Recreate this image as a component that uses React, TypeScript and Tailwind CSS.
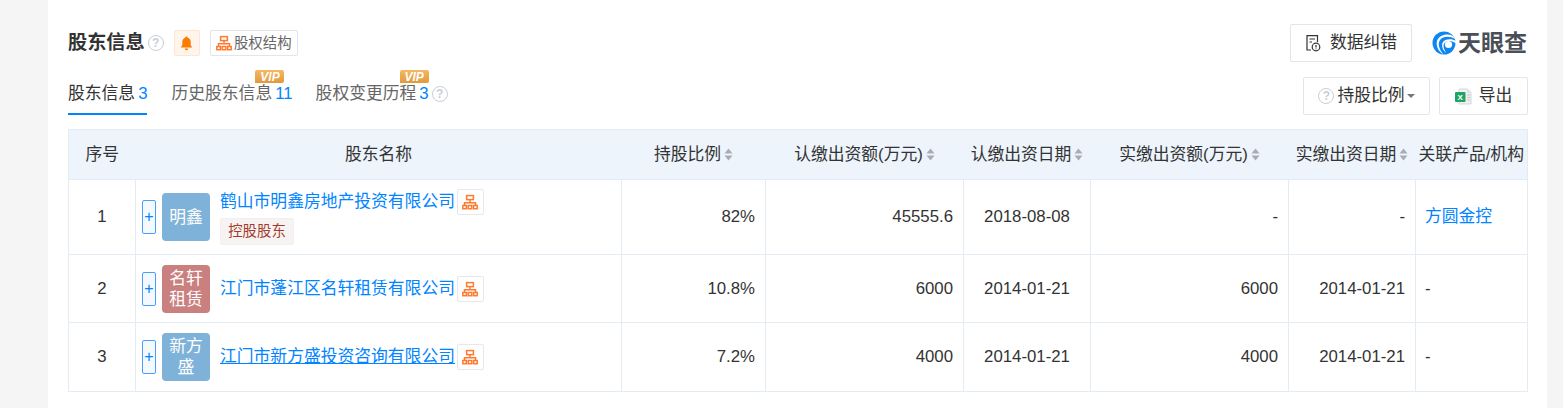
import React from 'react';

const FONT = 'font-["Liberation_Sans","Noto_Sans_CJK_SC",sans-serif]';

const Help = () => (
  <span className="inline-flex h-[16px] w-[16px] items-center justify-center rounded-full border-[1.5px] border-[#c8ced8] text-[12px] font-bold leading-none text-[#c8ced8]">
    ?
  </span>
);

const OrgIcon = ({ size = 16 }: { size?: number }) => (
  <svg width={size} height={size} viewBox="0 0 16 16" fill="none" stroke="#ff7a2e" strokeWidth="1.5">
    <rect x="4.6" y="1.6" width="6.8" height="4" />
    <path d="M8 5.6v4M2.5 11.5V8.8h11v2.7" />
    <rect x="0.8" y="11.5" width="3.6" height="3.2" />
    <rect x="6.2" y="11.5" width="3.6" height="3.2" />
    <rect x="11.6" y="11.5" width="3.6" height="3.2" />
  </svg>
);

const Vip = ({ className }: { className: string }) => (
  <span className={`absolute flex h-[13px] w-[29px] items-center justify-center rounded-[2px] rounded-bl-none bg-gradient-to-b from-[#f5b860] to-[#e09a3e] text-[12px] font-bold italic leading-none text-white ${className}`}>
    VIP
  </span>
);

const Sort = () => (
  <svg width="9" height="13" viewBox="0 0 9 13" className="ml-[3px] inline-block align-[-1px]" fill="#a8adb5">
    <path d="M4.500 0.500 8.500 5.500H0.500z" />
    <path d="M4.500 12.500 8.500 7.500H0.500z" />
  </svg>
);

const Logo = () => (
  <svg width="24" height="24" viewBox="0 0 24 24">
    <circle cx="12" cy="12" r="11.5" fill="#0e86f0" />
    <path d="M23 8C18 5 11 5 8 9 5.500 12.500 7 18 11.500 23.500 7 21 3.500 15 5 10 7 4 15 2 21 5z" fill="#fff" />
    <path d="M24 12.500c-3.500-3-9-3.500-11.500-0.500-1.800 2.200-1 6 2 10 -3.500-2-5.500-7-3.800-10.500C13 7.500 20 7.500 24 10z" fill="#fff" />
    <circle cx="16.500" cy="13.500" r="3.600" fill="#fff" />
  </svg>
);

const ExcelIcon = () => (
  <svg width="17" height="17" viewBox="0 0 17 17">
    <path d="M4 1h8.500L16 4.500V16H4z" fill="#eef0f2" stroke="#d5d8dc" />
    <path d="M12 1v4h4" fill="#dfe2e5" />
    <path d="M12 7h3M12 9.500h3M12 12h3" stroke="#c6cace" />
    <rect x="0" y="4" width="10.500" height="10" rx="1" fill="#1fa463" />
    <text x="5.200" y="12" textAnchor="middle" fontSize="8" fontWeight="700" fill="#fff" fontFamily="Liberation Sans">
      X
    </text>
  </svg>
);

const DocIcon = () => (
  <svg width="17" height="18" viewBox="0 0 17 18" fill="none" stroke="#333" strokeWidth="1.200">
    <path d="M6 16H2V1.600h10.500V8" />
    <path d="M4.500 5h5.500M4.500 8h2.500" />
    <circle cx="11" cy="13" r="3.800" />
    <path d="M11 11v2.500M11 14.500v0.800" />
  </svg>
);

const rows = [
  {
    no: 1,
    avatar: ['明鑫'],
    color: 'bg-[#7fb2d9]',
    name: '鹤山市明鑫房地产投资有限公司',
    tag: '控股股东',
    ratio: '82%',
    sub: '45555.6',
    subDate: '2018-08-08',
    paid: '-',
    paidDate: '-',
    product: '方圆金控',
    height: 'h-[75px]',
  },
  {
    no: 2,
    avatar: ['名轩', '租赁'],
    color: 'bg-[#c9807e]',
    name: '江门市蓬江区名轩租赁有限公司',
    ratio: '10.8%',
    sub: '6000',
    subDate: '2014-01-21',
    paid: '6000',
    paidDate: '2014-01-21',
    product: '-',
    height: 'h-[68px]',
  },
  {
    no: 3,
    avatar: ['新方', '盛'],
    color: 'bg-[#7fb2d9]',
    name: '江门市新方盛投资咨询有限公司',
    underline: true,
    ratio: '7.2%',
    sub: '4000',
    subDate: '2014-01-21',
    paid: '4000',
    paidDate: '2014-01-21',
    product: '-',
    height: 'h-[69px]',
  },
];

export default function App() {
  return (
    <div className={`h-[408px] w-[1563px] overflow-hidden bg-[#f5f5f5] text-[16.8px] text-[#333] ${FONT}`}>
      <div className="ml-[48px] h-full w-[1499px] bg-white pl-[20px] pr-[19px] pt-[24px]">
        {/* title row */}
        <div className="flex h-[38px] items-center justify-between">
          <div className="flex items-center">
            <span className="text-[19.200px] font-bold leading-none">股东信息</span>
            <span className="ml-[3px] flex"><Help /></span>
            <span className="ml-[10px] flex h-[26px] w-[26px] items-center justify-center rounded-[2px] border border-[#fde6d3] bg-[#fff5ec]">
              <svg width="13" height="15" viewBox="0 0 13 15" fill="#ff7a00">
                <path d="M6.500 0.500c-0.700 0-1.100 0.500-1.100 1.100C3.400 2.200 2.300 4 2.300 6v3L0.800 11.500h11.400L10.700 9V6c0-2-1.100-3.800-3.100-4.400 0-0.600-0.400-1.100-1.100-1.100z" />
                <path d="M4.700 12.500a1.800 1.800 0 0 0 3.600 0z" />
              </svg>
            </span>
            <span className="ml-[10px] flex h-[26px] w-[88px] items-center justify-center gap-[2px] rounded-[2px] border border-[#e2e5ec] text-[14.400px] leading-none text-[#666]">
              <OrgIcon />
              股权结构
            </span>
          </div>
          <div className="flex items-center">
            <button className="flex h-[38px] w-[122px] items-center justify-center gap-[8px] rounded-[2px] border border-[#e2e5ec]">
              <DocIcon />
              数据纠错
            </button>
            <span className="ml-[20px] flex w-[96px] items-center gap-[2px]">
              <Logo />
              <span className="text-[23px] font-bold leading-none text-[#4a4f57]">天眼查</span>
            </span>
          </div>
        </div>

        {/* tabs row */}
        <div className="mt-[15px] flex h-[38px] items-start justify-between">
          <div className="flex h-[38px] gap-[24px] text-[#666]">
            <div className="flex h-[38px] items-center border-b-2 border-[#0084ff] pb-[3px] text-[#333]">
              股东信息<span className="ml-[3px] text-[#0084ff]">3</span>
            </div>
            <div className="relative flex h-[38px] items-center pb-[5px]">
              历史股东信息<span className="ml-[3px] text-[#0084ff]">11</span>
              <Vip className="left-[84px] top-[-7px]" />
            </div>
            <div className="relative -ml-[1px] flex h-[38px] items-center pb-[5px]">
              股权变更历程<span className="ml-[3px] text-[#0084ff]">3</span>
              <span className="ml-[3px] flex"><Help /></span>
              <Vip className="left-[84px] top-[-7px]" />
            </div>
          </div>
          <div className="flex gap-[9px]">
            <button className="flex h-[38px] w-[127px] items-center justify-center rounded-[2px] border border-[#e2e5ec]">
              <span className="mr-[3px] flex"><Help /></span>
              持股比例
              <svg width="8" height="4" viewBox="0 0 8 4" fill="#777" className="ml-[2px]"><path d="M0 0h8L4 4z" /></svg>
            </button>
            <button className="flex h-[38px] w-[89px] items-center justify-center gap-[7px] rounded-[2px] border border-[#e2e5ec]">
              <ExcelIcon />
              导出
            </button>
          </div>
        </div>

        {/* table */}
        <table className="mt-[14px] w-[1459px] table-fixed border-collapse border border-[#e3ecf5]">
          <colgroup>
            <col className="w-[67px]" />
            <col className="w-[486px]" />
            <col className="w-[144px]" />
            <col className="w-[198px]" />
            <col className="w-[127px]" />
            <col className="w-[198px]" />
            <col className="w-[127px]" />
            <col className="w-[112px]" />
          </colgroup>
          <thead>
            <tr className="h-[50px] bg-[#edf4fc] text-center">
              <th className="font-normal">序号</th>
              <th className="font-normal">股东名称</th>
              <th className="font-normal">持股比例<Sort /></th>
              <th className="whitespace-nowrap font-normal">认缴出资额(万元)<Sort /></th>
              <th className="whitespace-nowrap font-normal">认缴出资日期<Sort /></th>
              <th className="whitespace-nowrap font-normal">实缴出资额(万元)<Sort /></th>
              <th className="whitespace-nowrap font-normal">实缴出资日期<Sort /></th>
              <th className="whitespace-nowrap font-normal">关联产品/机构</th>
            </tr>
          </thead>
          <tbody>
            {rows.map((r) => (
              <tr key={r.no} className={r.height}>
                <td className="border border-[#e3ecf5] text-center">{r.no}</td>
                <td className="border border-[#e3ecf5] pl-[6px]">
                  <div className="flex items-center">
                    <span className="flex h-[34px] w-[14px] items-center justify-center rounded-[2px] border border-[#4a9eff] bg-[#f3f9ff] text-[16px] leading-none text-[#0084ff]">+</span>
                    <span className={`ml-[6px] flex h-[48px] w-[48px] flex-col items-center justify-center rounded-[4px] text-[16.800px] leading-[21px] text-white ${r.color}`}>
                      {r.avatar.map((line) => (
                        <span key={line}>{line}</span>
                      ))}
                    </span>
                    <div className="ml-[10px]">
                      <div className="flex items-center">
                        <a className={`text-[#0084ff] ${r.underline ? 'underline' : ''}`}>{r.name}</a>
                        <span className="ml-[2px] flex h-[26px] w-[27px] items-center justify-center rounded-[2px] border border-[#e6e8ee]">
                          <OrgIcon />
                        </span>
                      </div>
                      {r.tag && (
                        <span className="mt-[3px] flex h-[27px] w-[74px] items-center justify-center rounded-[2px] border border-[#f5eeee] bg-[#f8f3f3] text-[14.400px] leading-none text-[#a23b2b]">
                          {r.tag}
                        </span>
                      )}
                    </div>
                  </div>
                </td>
                <td className="border border-[#e3ecf5] pr-[10px] text-right">{r.ratio}</td>
                <td className="border border-[#e3ecf5] pr-[10px] text-right">{r.sub}</td>
                <td className="border border-[#e3ecf5] text-center">{r.subDate}</td>
                <td className="border border-[#e3ecf5] pr-[10px] text-right">{r.paid}</td>
                <td className="border border-[#e3ecf5] pr-[10px] text-right">{r.paidDate}</td>
                <td className={`border border-[#e3ecf5] pl-[9px] ${r.product === '-' ? '' : 'text-[#0084ff]'}`}>{r.product}</td>
              </tr>
            ))}
          </tbody>
        </table>
      </div>
    </div>
  );
}
